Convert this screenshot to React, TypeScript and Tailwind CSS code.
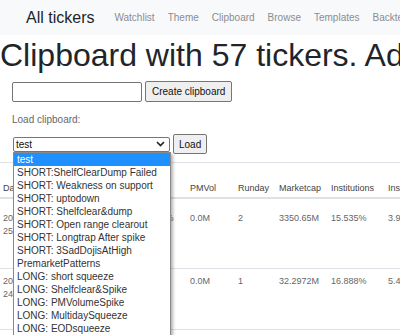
const navLinks = ['Watchlist', 'Theme', 'Clipboard', 'Browse', 'Templates', 'Backtest'];

const options = [
  'test',
  'SHORT:ShelfClearDump Failed',
  'SHORT: Weakness on support',
  'SHORT: uptodown',
  'SHORT: Shelfclear&dump',
  'SHORT: Open range clearout',
  'SHORT: Longtrap After spike',
  'SHORT: 3SadDojisAtHigh',
  'PremarketPatterns',
  'LONG: short squeeze',
  'LONG: Shelfclear&Spike',
  'LONG: PMVolumeSpike',
  'LONG: MultidaySqueeze',
  'LONG: EODsqueeze',
];

const cols = [
  { key: 'date', label: 'Date', w: 'w-[60px]' },
  { key: 'ticker', label: 'Ticker', w: 'w-[80px]' },
  { key: 'chg', label: 'Chg', w: 'w-[47px]' },
  { key: 'pmvol', label: 'PMVol', w: 'w-[48px]' },
  { key: 'runday', label: 'Runday', w: 'w-[41px]' },
  { key: 'mcap', label: 'Marketcap', w: 'w-[52px]' },
  { key: 'inst', label: 'Institutions', w: 'w-[57px]' },
  { key: 'ins', label: 'Insiders', w: 'w-[60px]' },
];

const rows = [
  { date: ['2024-05-', '25'], ticker: 'AAPL', chg: '12.35%', pmvol: '0.0M', runday: '2', mcap: '3350.65M', inst: '15.535%', ins: '3.912%', h: 'h-[71px] pt-[13px]' },
  { date: ['2024-05-', '24'], ticker: 'TSLA', chg: '8.1%', pmvol: '0.0M', runday: '1', mcap: '32.2972M', inst: '16.888%', ins: '5.410%', h: 'h-[61px] pt-[6px]' },
];

function Chevron() {
  return (
    <svg width="9" height="6" viewBox="0 0 9 6" className="shrink-0">
      <polyline points="1,1 4.5,4.5 8,1" fill="none" stroke="#222" strokeWidth="1.6" />
    </svg>
  );
}

export default function App() {
  return (
    <div className="relative h-[335px] w-[400px] overflow-hidden bg-white font-['Liberation_Sans',Arial,sans-serif]">
      <nav className="flex h-[35px] items-center whitespace-nowrap bg-[#f8f9fa] pl-[26px]">
        <span className="mr-[20px] text-[16px] text-[#212529]">All tickers</span>
        <div className="flex gap-[13px] text-[10px] text-[#8c8d8e]">
          {navLinks.map((l) => <span key={l}>{l}</span>)}
        </div>
      </nav>

      <h1 className="mt-[1px] whitespace-nowrap text-[32px] leading-[38px] text-[#212529]">
        Clipboard with 57 tickers. Add tickers
      </h1>

      <div className="ml-[12px] mt-[7px] flex items-center gap-[3px]">
        <div className="h-[20px] w-[130px] rounded-[2px] border border-[#767676] bg-white" />
        <button className="h-[21px] rounded-[2px] border border-[#767676] bg-[#efefef] px-[6px] text-[10px] text-[#111]">
          Create clipboard
        </button>
      </div>

      <div className="ml-[12px] mt-[12px] text-[10px] leading-[12px] text-[#666]">Load clipboard:</div>

      <div className="ml-[13px] mt-[8px] flex items-center gap-[3px]">
        <div className="flex h-[15px] w-[157px] items-center justify-between rounded-[2px] border border-[#767676] bg-white pl-[2px] pr-[4px] text-[10px] text-[#111]">
          <span>test</span>
          <Chevron />
        </div>
        <button className="h-[20px] rounded-[2px] border border-[#767676] bg-[#efefef] px-[5px] text-[10px] text-[#111]">
          Load
        </button>
      </div>

      <table className="mt-[8px] w-[445px] table-fixed border-collapse text-left text-[9px] leading-[13px]">
        <thead>
          <tr className="border-b-2 border-t border-[#dee2e6]">
            {cols.map((c) => (
              <th key={c.key} className={`${c.w} h-[35px] whitespace-nowrap px-[3px] pb-[2px] align-bottom font-normal text-[#444]`}>
                {c.label}
              </th>
            ))}
          </tr>
        </thead>
        <tbody>
          {rows.map((r, i) => (
            <tr key={i} className="border-b border-[#dee2e6] text-[#666]">
              {cols.map((c) => (
                <td key={c.key} className={`${r.h} whitespace-nowrap px-[3px] align-top`}>
                  {c.key === 'date' ? (
                    <>
                      <div>{r.date[0]}</div>
                      <div>{r.date[1]}</div>
                    </>
                  ) : (
                    r[c.key as 'ticker']
                  )}
                </td>
              ))}
            </tr>
          ))}
        </tbody>
      </table>

      <div className="absolute left-[13px] top-[152px] w-[158px] border border-[#8a8a8a] bg-white pb-[1px] text-[10px] leading-[13px] text-[#333] shadow-[2px_2px_3px_rgba(0,0,0,0.3)]">
        {options.map((o, i) => (
          <div key={o} className={i === 0 ? 'bg-[#1e90ff] pl-[3px] text-white' : 'pl-[3px]'}>
            {o}
          </div>
        ))}
      </div>
    </div>
  );
}
